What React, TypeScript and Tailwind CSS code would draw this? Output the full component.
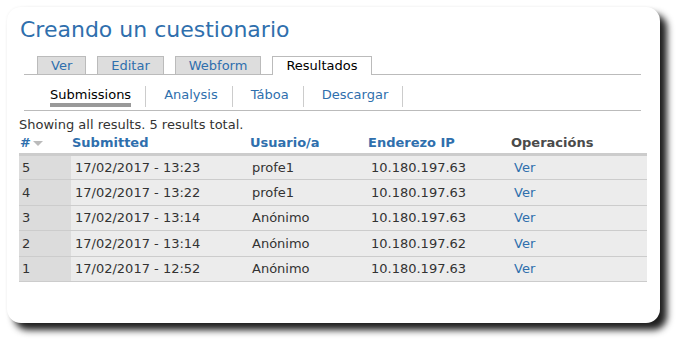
import React from 'react'

const rows = [
  { n: '5', date: '17/02/2017 - 13:23', user: 'profe1', ip: '10.180.197.63' },
  { n: '4', date: '17/02/2017 - 13:22', user: 'profe1', ip: '10.180.197.63' },
  { n: '3', date: '17/02/2017 - 13:14', user: 'Anónimo', ip: '10.180.197.63' },
  { n: '2', date: '17/02/2017 - 13:14', user: 'Anónimo', ip: '10.180.197.62' },
  { n: '1', date: '17/02/2017 - 12:52', user: 'Anónimo', ip: '10.180.197.63' },
]

export default function App() {
  return (
    <div className="w-[684px] h-[347px] bg-white pt-[7px] pl-[7px] font-['DejaVu_Sans',sans-serif] text-[#333]">
      <div className="w-[653px] h-[316px] rounded-[14px] bg-white shadow-[7px_7px_7px_#1f1f1f,0_0_3px_rgba(0,0,0,0.06)] pt-[9px] px-[12px]">
        {/* Title */}
        <h1 className="text-[22px] leading-[28px] text-[#2f6fad] pl-[1px]">Creando un cuestionario</h1>

        {/* Primary tabs */}
        <ul className="mt-[12px] ml-[5px] mr-[7px] flex border-b border-[#bbb] pl-[13px] gap-[11px] text-[13px] leading-[16px]">
          {['Ver', 'Editar', 'Webform'].map((t) => (
            <li key={t} className="border border-b-0 border-[#bbb] bg-[#ddd] px-[13px] pt-[1px] text-[#2f6fad]">
              {t}
            </li>
          ))}
          <li className="border border-b-0 border-[#bbb] bg-white px-[13px] pt-[1px] -mb-px pb-px text-black">Resultados</li>
        </ul>

        {/* Secondary tabs */}
        <ul className="ml-[5px] mr-[7px] flex border-b border-[#bbb] pl-[8px] pt-[11px] pb-[3px] text-[13px] leading-[17px]">
          <li className="pl-[18px] pr-[14px] border-r border-[#ccc]">
            <span className="block text-black border-b-[4px] border-[#999] pb-0">Submissions</span>
          </li>
          {['Analysis', 'Táboa', 'Descargar'].map((t) => (
            <li key={t} className="pl-[18px] pr-[14px] border-r border-[#ccc] text-[#2f6fad] pb-[4px]">
              {t}
            </li>
          ))}
        </ul>

        <p className="text-[13px] leading-[16px] mt-[6px]">Showing all results. 5 results total.</p>

        {/* Results table */}
        <table className="w-[628px] text-[13px] border-collapse">
          <thead>
            <tr className="border-b-[3px] border-[#ccc] text-left font-bold">
              <th className="w-[52px] pl-[1px] pt-[1px] pb-[1px] leading-[17px] text-[#2f6fad]">
                #
                <svg className="inline-block ml-[2px] align-middle" width="10" height="6" viewBox="0 0 10 6">
                  <path d="M0 0 L10 0 L5 5 Z" fill="#bbb" />
                </svg>
              </th>
              <th className="w-[178px] pl-[1px] text-[#2f6fad]">Submitted</th>
              <th className="w-[118px] pl-[1px] text-[#2f6fad]">Usuario/a</th>
              <th className="w-[143px] pl-[1px] text-[#2f6fad]">Enderezo IP</th>
              <th className="pl-[1px] text-[#4a4a4a]">Operacións</th>
            </tr>
          </thead>
          <tbody>
            {rows.map((r) => (
              <tr key={r.n} className="h-[25.5px] border-b border-[#ccc] bg-[#ececec]">
                <td className="bg-[#dcdcdc] pl-[3px]">{r.n}</td>
                <td className="pl-[4px]">{r.date}</td>
                <td className="pl-[3px]">{r.user}</td>
                <td className="pl-[4px]">{r.ip}</td>
                <td className="pl-[4px] text-[#2f6fad]">Ver</td>
              </tr>
            ))}
          </tbody>
        </table>
      </div>
    </div>
  )
}
